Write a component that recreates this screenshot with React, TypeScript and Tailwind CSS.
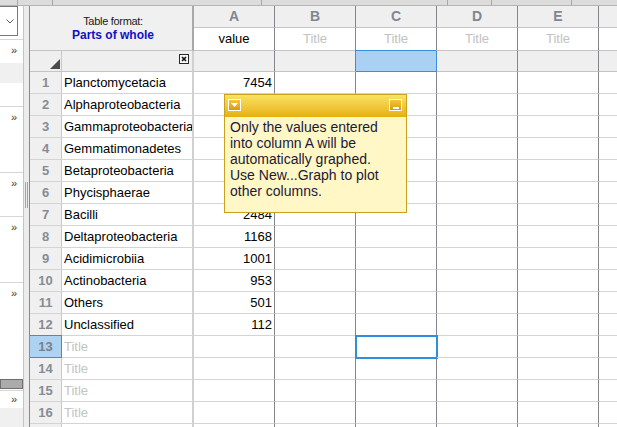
import type { ReactNode } from 'react'

const tickWidths = [18, 35, 209, 186, 44, 80]

const letters = ['A', 'B', 'C', 'D', 'E'] as const

// values of rows 2-6 sit under the note and are not shown
const rows = [
  { name: 'Planctomycetacia', value: '7454' },
  { name: 'Alphaproteobacteria', value: '' },
  { name: 'Gammaproteobacteria', value: '' },
  { name: 'Gemmatimonadetes', value: '' },
  { name: 'Betaproteobacteria', value: '' },
  { name: 'Phycisphaerae', value: '' },
  { name: 'Bacilli', value: '2484' },
  { name: 'Deltaproteobacteria', value: '1168' },
  { name: 'Acidimicrobiia', value: '1001' },
  { name: 'Actinobacteria', value: '953' },
  { name: 'Others', value: '501' },
  { name: 'Unclassified', value: '112' },
  { name: '', value: '' },
  { name: '', value: '' },
  { name: '', value: '' },
  { name: '', value: '' },
  { name: '', value: '' },
]

function Chevrons() {
  return (
    <div className="flex h-[20px] items-center justify-end pr-[6px] text-[11px] leading-none text-[#3a3a3a]">»</div>
  )
}

function SidePanel() {
  return (
    <div className="flex w-[24px] shrink-0 flex-col border-r border-[#c4c4c4] bg-white">
      <div className="h-[34px] border-b border-[#d6d6d6]">
        <div className="flex h-[30px] w-[18px] items-center justify-center border-y border-r border-[#7a7a7a] pl-[2px]">
          <svg width="8" height="5" viewBox="0 0 8 5" fill="none" stroke="#5a5a5a" strokeWidth="1">
            <path d="M0.5 0.5 L4 4 L7.5 0.5" />
          </svg>
        </div>
      </div>
      <div className="h-[67px] border-b border-[#d6d6d6]">
        <Chevrons />
        <div className="mt-[3px] h-[20px] bg-[#f0f0f0]" />
      </div>
      <div className="h-[66px] border-b border-[#d6d6d6]">
        <Chevrons />
      </div>
      <div className="h-[44px] border-b border-[#d6d6d6]">
        <Chevrons />
      </div>
      <div className="h-[66px] border-b border-[#d6d6d6]">
        <Chevrons />
      </div>
      <div className="h-[96px]">
        <Chevrons />
      </div>
      <div className="h-[10px] border border-[#6e6e6e] bg-[#ababab]" />
      <div className="h-[2px] border-b border-[#d6d6d6]" />
      <div className="flex h-[17px] items-center justify-end pr-[6px] text-[11px] leading-none text-[#3a3a3a]">»</div>
      <div className="flex-1 bg-[#f0f0f0]" />
    </div>
  )
}

function Splitter() {
  return (
    <div className="w-[5px] shrink-0 bg-[#ececec]">
      <div className="mx-auto mt-[176px] h-[26px] w-[3px] border-x border-[#a4a4a4]" />
    </div>
  )
}

function Cell({ className, children }: { className: string; children?: ReactNode }) {
  return <div className={className}>{children}</div>
}

function Sheet() {
  return (
    <div className="grid flex-1 grid-cols-[32px_132px_81px_81px_81px_81px_81px_1fr] content-start border-l border-[#8a8a8a]">
      {/* header: table format */}
      <div className="col-span-2 row-span-2 flex flex-col items-center justify-center border-r-2 border-b border-r-[#a8a8a8] border-b-[#c4c4c4] bg-[#f0f0f0] pl-[4px]">
        <span className="text-[11px] leading-[14px] tracking-[-0.3px] text-[#1a1a1a]">Table format:</span>
        <span className="text-[12px] leading-[14px] font-bold text-[#1010c8]">Parts of whole</span>
      </div>
      {letters.map((l) => (
        <Cell
          key={l}
          className="flex h-[22px] items-center justify-center border-r border-b border-r-[#85858d] border-b-[#c4c4c4] bg-[#efefef] text-[14px] font-bold text-[#7e8692]"
        >
          {l}
        </Cell>
      ))}
      <Cell className="h-[22px] border-b border-[#c4c4c4] bg-[#efefef]" />

      {/* header: column titles */}
      {letters.map((l) => (
        <Cell
          key={l}
          className={`flex h-[23px] items-center justify-center border-r border-b border-r-[#85858d] border-b-[#c4c4c4] bg-white text-[13px] ${
            l === 'A' ? 'text-black' : 'text-[#c2c2c2]'
          }`}
        >
          {l === 'A' ? 'value' : 'Title'}
        </Cell>
      ))}
      <Cell className="h-[23px] border-b border-[#c4c4c4] bg-white" />

      {/* header: corner row */}
      <Cell className="flex h-[21px] items-end justify-end border-r border-b border-r-[#c8c8c8] border-b-[#c4c4c4] bg-[#efefef] pr-[1px] pb-[2px]">
        <svg width="10" height="10" viewBox="0 0 10 10">
          <path d="M10 0 L10 10 L0 10 Z" fill="#4a4a4a" />
        </svg>
      </Cell>
      <Cell className="flex h-[21px] items-start justify-end border-r-2 border-b border-r-[#d0d0d0] border-b-[#c4c4c4] bg-[#efefef] pt-[3px] pr-[3px]">
        <svg width="10" height="10" viewBox="0 0 10 10">
          <rect x="0.5" y="0.5" width="9" height="9" fill="#f8f8f8" stroke="#2a2a2a" />
          <path d="M3 3 L7 7 M7 3 L3 7" stroke="#111" strokeWidth="1.6" />
        </svg>
      </Cell>
      {letters.map((l) => (
        <Cell
          key={l}
          className={
            l === 'C'
              ? 'h-[21px] border-r border-b border-[#3a8edb] bg-[#aad1f1] shadow-[-1px_-1px_0_0_#3a8edb]'
              : 'h-[21px] border-r border-b border-r-[#85858d] border-b-[#c4c4c4] bg-[#efefef]'
          }
        />
      ))}
      <Cell className="h-[21px] border-b border-[#c4c4c4] bg-[#efefef]" />

      {/* data rows */}
      {rows.map((r, i) => {
        const n = i + 1
        const empty = r.name === ''
        return (
          <div key={n} className="contents">
            <Cell
              className={
                n === 13
                  ? 'flex h-[22px] items-center justify-center border-r border-b border-[#3a8edb] bg-[#aed3f2] text-[13px] font-bold text-[#78808c] shadow-[0_-1px_0_0_#3a8edb]'
                  : 'flex h-[22px] items-center justify-center border-r border-b border-r-[#c8c8c8] border-b-[#d4d4d4] bg-[#f0f0f0] text-[13px] font-bold text-[#868c96]'
              }
            >
              {n <= 16 ? n : null}
            </Cell>
            <Cell className="flex h-[22px] items-center overflow-hidden border-r-2 border-b border-r-[#d0d0d0] border-b-[#d4d4d4] pl-[2px] whitespace-nowrap">
              {empty ? <span className="text-[#c4c4c4]">{n <= 16 ? 'Title' : ''}</span> : <span className="text-black">{r.name}</span>}
            </Cell>
            {letters.map((l) => (
              <Cell
                key={l}
                className={`flex h-[22px] items-center justify-end border-r border-b border-r-[#85858d] border-b-[#d4d4d4] pr-[2px] text-black ${
                  l === 'C' && n === 13 ? 'outline-2 outline-offset-[-1px] outline-[#2d8fdd]' : ''
                }`}
              >
                {l === 'A' && r.value ? r.value : null}
              </Cell>
            ))}
            <Cell className="h-[22px] border-b border-[#d4d4d4]" />
          </div>
        )
      })}
    </div>
  )
}

function TipButton({ kind }: { kind: 'menu' | 'min' }) {
  return (
    <div className="flex h-[12px] w-[13px] items-center justify-center border border-white bg-linear-to-b from-[#f3c63a] to-[#d99d00]">
      {kind === 'menu' ? (
        <svg width="7" height="4" viewBox="0 0 7 4">
          <path d="M0 0 L7 0 L3.5 4 Z" fill="#fff" />
        </svg>
      ) : (
        <div className="mt-[5px] h-[2px] w-[6px] bg-white" />
      )}
    </div>
  )
}

function Tooltip() {
  return (
    <div className="absolute top-[94px] left-[224px] flex h-[119px] w-[183px] flex-col border border-[#caa020] bg-[#fff7c6]">
      <div className="flex h-[22px] items-start justify-between bg-linear-to-b from-[#fbe25e] to-[#e6b000] pt-[4px] pr-[4px] pl-[3px]">
        <TipButton kind="menu" />
        <TipButton kind="min" />
      </div>
      <p className="pt-[2px] pl-[5px] text-[14px] leading-[16px] text-[#1c1a38]">
        Only the values entered
        <br />
        into column A will be
        <br />
        automatically graphed.
        <br />
        Use New...Graph to plot
        <br />
        other columns.
      </p>
    </div>
  )
}

export default function App() {
  return (
    <div className="relative h-[427px] w-[617px] overflow-hidden bg-white font-['Liberation_Sans',Arial,sans-serif] text-[13px]">
      <div className="flex h-[6px] border-b border-[#b4b4b4] bg-[#dcdcdc]">
        {tickWidths.map((w, i) => (
          <div key={i} className="h-full border-r border-[#a8a8a8]" style={{ width: w }} />
        ))}
      </div>
      <div className="flex h-[421px]">
        <SidePanel />
        <Splitter />
        <Sheet />
      </div>
      <Tooltip />
    </div>
  )
}
